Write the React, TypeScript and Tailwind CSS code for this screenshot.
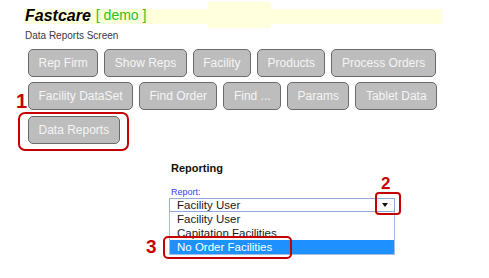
import React from 'react';

const rows = [
  ['Rep Firm', 'Show Reps', 'Facility', 'Products', 'Process Orders'],
  ['Facility DataSet', 'Find Order', 'Find ...', 'Params', 'Tablet Data'],
  ['Data Reports'],
];

const options = ['Facility User', 'Capitation Facilities', 'No Order Facilities'];

function NavButton({ label }: { label: string }) {
  return (
    <button className="h-[28px] px-[9.5px] border border-[#6a6a6a] rounded-[5px] bg-[#bdbdbd] text-[#f5f5f5] text-[12px] leading-none">
      {label}
    </button>
  );
}

export default function App() {
  return (
    <div
      className="relative w-[489px] h-[278px] bg-white overflow-hidden"
      style={{ fontFamily: '"Liberation Sans", Arial, sans-serif' }}
    >
      {/* Header band */}
      <div className="flex items-start pl-[24px] pt-[2px]">
        <div className="mt-[7px] h-[15px] w-[184px] bg-[#ffffdd] flex items-start pl-[1px]">
          <span className="text-[16px] leading-[13px] font-bold italic text-black">Fastcare</span>
          <span className="ml-[5px] text-[14px] leading-[13px] text-[#22c422]">[ demo ]</span>
        </div>
        <div className="h-[26px] w-[63px] bg-[#ffffdd]" />
        <div className="mt-[7px] h-[15px] w-[171px] bg-[#ffffdd]" />
      </div>
      <div className="mt-[2px] pl-[25px] text-[10px] leading-[12px] text-[#3a3a3a]">Data Reports Screen</div>

      {/* Menu buttons */}
      <div className="mt-[7px] pl-[28px] flex flex-col gap-y-[5px]">
        {rows.map((row, i) => (
          <div key={i} className={`flex gap-x-[6px] ${i === 2 ? 'mt-[1px]' : ''}`}>
            {row.map((label) => (
              <NavButton key={label} label={label} />
            ))}
          </div>
        ))}
      </div>

      {/* Reporting */}
      <div className="mt-[18px] ml-[169px] w-[226px]">
        <div className="pl-[2px] text-[11px] leading-[13px] font-bold text-[#111]">Reporting</div>
        <div className="mt-[12px] pl-[2px] text-[9px] leading-[11px] text-[#3c3cf0]">Report:</div>
        <div className="h-[14px] border border-[#94abd9] flex items-center justify-between pl-[7px] pr-[6px]">
          <span className="text-[11.5px] leading-[12px] text-[#1a1a1a]">Facility User</span>
          <svg width="6" height="4" viewBox="0 0 6 4">
            <path d="M0 0 L6 0 L3 4 Z" fill="#111" />
          </svg>
        </div>
        <div className="border border-t-0 border-[#a9bde3]">
          {options.map((o, i) => (
            <div
              key={o}
              className={`h-[14px] pl-[7px] text-[11.5px] leading-[14px] ${
                i === 2 ? 'bg-[#1e90ff] text-white' : 'text-[#1a1a1a]'
              }`}
            >
              {o}
            </div>
          ))}
        </div>
      </div>

      {/* Annotations */}
      <div className="absolute left-[18px] top-[112px] w-[111px] h-[39px] border-2 border-[#c40000] rounded-[7px]" />
      <div className="absolute left-[375px] top-[192px] w-[26px] h-[23px] border-2 border-[#c40000] rounded-[4px]" />
      <div className="absolute left-[163px] top-[236px] w-[129px] h-[23px] border-2 border-[#c40000] rounded-[5px]" />
      <span className="absolute left-[16px] top-[91px] text-[20px] leading-[20px] font-bold text-[#c80000]">1</span>
      <span className="absolute left-[381px] top-[175px] text-[17px] leading-[17px] font-bold text-[#c80000]">2</span>
      <span className="absolute left-[146px] top-[237px] text-[19px] leading-[19px] font-bold text-[#c80000]">3</span>
    </div>
  );
}
